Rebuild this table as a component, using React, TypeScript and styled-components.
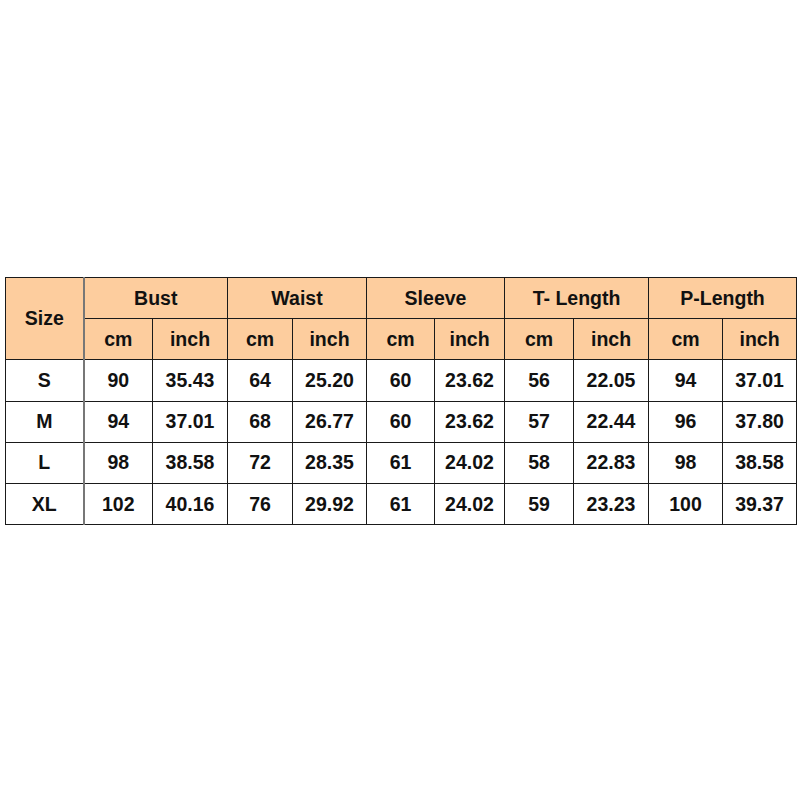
import React from 'react';
import styled, { createGlobalStyle } from 'styled-components';

type Row = {
  size: string,
  values: string[]
}

const groups = ['Bust', 'Waist', 'Sleeve', 'T- Length', 'P-Length'];

const rows: Row[] = [
  { size: 'S', values: ['90', '35.43', '64', '25.20', '60', '23.62', '56', '22.05', '94', '37.01'] },
  { size: 'M', values: ['94', '37.01', '68', '26.77', '60', '23.62', '57', '22.44', '96', '37.80'] },
  { size: 'L', values: ['98', '38.58', '72', '28.35', '61', '24.02', '58', '22.83', '98', '38.58'] },
  { size: 'XL', values: ['102', '40.16', '76', '29.92', '61', '24.02', '59', '23.23', '100', '39.37'] },
];

const widths = [78, 69, 75, 65, 74, 68, 70, 69, 75, 74, 74];

const GlobalStyle = createGlobalStyle`
  body {
    margin: 0;
    background: #ffffff;
    font-family: "Liberation Sans", Arial, sans-serif;
  }
`

const Page = styled.div`
  width: 800px;
  height: 800px;
  padding: 277px 0 0 5px;
  box-sizing: border-box;
`

const Table = styled.table`
  border-collapse: collapse;
  table-layout: fixed;
  width: 791px;
  color: #111;
  font-weight: bold;
  font-size: 19.5px;
`

const Cell = styled.td<{head?: boolean, divider?: boolean}>`
  height: 40.2px;
  padding: 0;
  text-align: center;
  vertical-align: middle;
  border: 1px solid #1a1a1a;
  border-right: ${({divider}) => divider ? '2px solid #777' : '1px solid #1a1a1a'};
  background-color: ${({head}) => head ? '#fdcd9e' : '#ffffff'};
`

const App: React.FC = () => {
  return (
    <Page>
      <GlobalStyle />
      <Table>
        <colgroup>
          {widths.map((w, i) => <col key={i} style={{ width: w }} />)}
        </colgroup>
        <thead>
          <tr>
            <Cell as="th" head divider rowSpan={2}>Size</Cell>
            {groups.map(g => (
              <Cell as="th" head colSpan={2} key={g}>{g}</Cell>
            ))}
          </tr>
          <tr>
            {groups.map(g => (
              <React.Fragment key={g}>
                <Cell as="th" head>cm</Cell>
                <Cell as="th" head>inch</Cell>
              </React.Fragment>
            ))}
          </tr>
        </thead>
        <tbody>
          {rows.map(r => (
            <tr key={r.size}>
              <Cell divider>{r.size}</Cell>
              {r.values.map((v, i) => <Cell key={i}>{v}</Cell>)}
            </tr>
          ))}
        </tbody>
      </Table>
    </Page>
  );
};

export default App;
